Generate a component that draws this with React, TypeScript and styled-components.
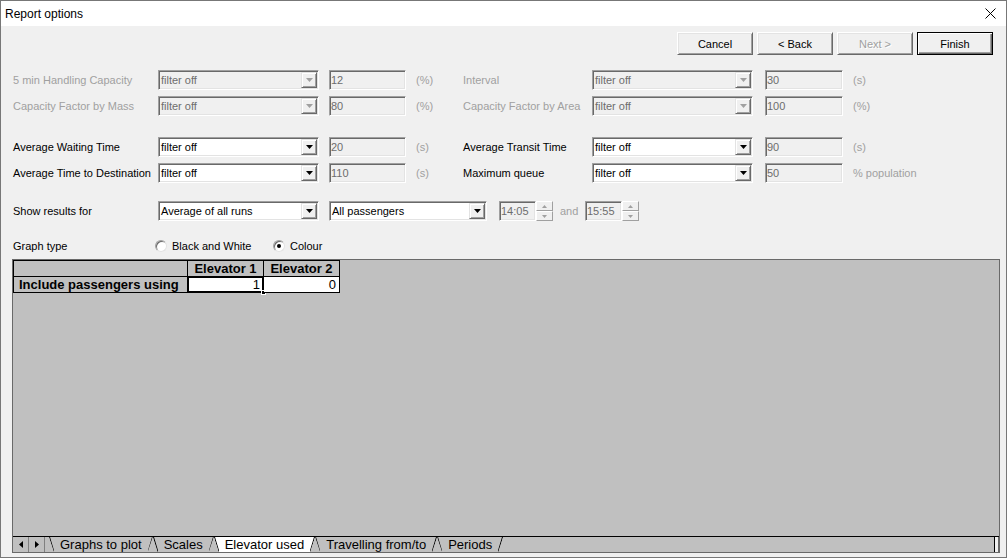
import React from 'react';
import styled, { createGlobalStyle } from 'styled-components';

const GlobalStyle = createGlobalStyle`
  html, body { margin: 0; padding: 0; }
  body {
    background: #ffffff;
    font-family: "Liberation Sans", Arial, sans-serif;
    font-size: 11px;
    color: #000;
    overflow: hidden;
  }
`;

const Window = styled.div`
  width: 1007px;
  height: 558px;
  box-sizing: border-box;
  border: 1px solid #777777;
  background: #f0f0f0;
  display: flex;
  flex-direction: column;
`;

const TitleBar = styled.div`
  height: 25px;
  flex: none;
  background: #ffffff;
  display: flex;
  align-items: center;
  padding: 0 10px 0 4px;
  font-family: "Liberation Sans", Arial, sans-serif;
  font-size: 12px;
`;

const Title = styled.span`
  flex: 1;
`;

const ButtonRow = styled.div`
  display: flex;
  justify-content: flex-end;
  gap: 4px;
  padding: 6px 13px 0 0;
`;

const Button = styled.button<{ $default?: boolean }>`
  width: 76px;
  height: 23px;
  box-sizing: border-box;
  padding: 0;
  font-family: "Liberation Sans", Arial, sans-serif;
  font-size: 11px;
  color: #000;
  background: #f0f0f0;
  border: 1px solid;
  border-color: ${(p) => (p.$default ? '#000' : '#ffffff #696969 #696969 #ffffff')};
  box-shadow: ${(p) =>
    p.$default
      ? 'inset 1px 1px 0 #ffffff, inset -1px -1px 0 #696969, inset -2px -2px 0 #a0a0a0'
      : 'inset 1px 1px 0 #e3e3e3, inset -1px -1px 0 #a0a0a0'};

  &:disabled {
    color: #a0a0a0;
    text-shadow: 1px 1px 0 #ffffff;
  }
`;

const FilterGrid = styled.div<{ $top: number }>`
  display: grid;
  grid-template-columns: 145px 171px 87px 47px 129px 173px 88px auto;
  grid-auto-rows: 20px;
  row-gap: 6px;
  align-items: center;
  padding-left: 12px;
  margin-top: ${(p) => p.$top}px;
`;

const Label = styled.span<{ $disabled?: boolean }>`
  color: ${(p) => (p.$disabled ? '#a0a0a0' : '#000')};
  white-space: nowrap;
`;

const Unit = styled.span`
  color: #a0a0a0;
  white-space: nowrap;
`;

const Sunken = styled.div<{ $w: number; $disabled?: boolean }>`
  width: ${(p) => p.$w}px;
  height: 20px;
  box-sizing: border-box;
  border: 1px solid;
  border-color: #a0a0a0 #ffffff #ffffff #a0a0a0;
  box-shadow: inset 1px 1px 0 #696969, inset -1px -1px 0 #e3e3e3;
  background: ${(p) => (p.$disabled ? '#f0f0f0' : '#ffffff')};
  display: flex;
  align-items: center;
`;

const Value = styled.span<{ $disabled?: boolean; $pad: number }>`
  flex: 1;
  padding-left: ${(p) => p.$pad}px;
  color: ${(p) => (p.$disabled ? '#6d6d6d' : '#000')};
  white-space: nowrap;
  overflow: hidden;
`;

const DropButton = styled.span`
  width: 16px;
  height: 16px;
  margin: 1px;
  box-sizing: border-box;
  background: #f0f0f0;
  border: 1px solid;
  border-color: #e3e3e3 #696969 #696969 #e3e3e3;
  box-shadow: inset 1px 1px 0 #ffffff, inset -1px -1px 0 #a0a0a0;
  display: flex;
  align-items: center;
  justify-content: center;
`;

const ResultsRow = styled.div`
  display: flex;
  align-items: center;
  height: 20px;
  margin-top: 18px;
  padding-left: 12px;
`;

const RowLabel = styled.span<{ $w: number }>`
  width: ${(p) => p.$w}px;
  flex: none;
  white-space: nowrap;
`;

const Spacer = styled.span<{ $w: number }>`
  width: ${(p) => p.$w}px;
  flex: none;
`;

const AndLabel = styled.span`
  width: 32px;
  flex: none;
  padding-left: 7px;
  box-sizing: border-box;
  color: #a0a0a0;
`;

const TimeField = styled.div`
  display: flex;
  align-items: center;
  flex: none;
`;

const Spinner = styled.div`
  width: 17px;
  height: 20px;
  display: flex;
  flex-direction: column;
`;

const SpinButton = styled.span`
  flex: 1;
  box-sizing: border-box;
  background: #f0f0f0;
  border: 1px solid;
  border-color: #ffffff #a0a0a0 #a0a0a0 #ffffff;
  display: flex;
  align-items: center;
  justify-content: center;
`;

const GraphRow = styled.div`
  display: flex;
  align-items: center;
  height: 14px;
  margin-top: 18px;
  padding-left: 12px;
`;

const RadioOption = styled.label<{ $w?: number }>`
  display: flex;
  align-items: center;
  gap: 5px;
  width: ${(p) => (p.$w ? `${p.$w}px` : 'auto')};
`;

const Radio = styled.span<{ $checked?: boolean }>`
  width: 12px;
  height: 12px;
  box-sizing: border-box;
  border-radius: 50%;
  border: 1px solid;
  border-color: #a0a0a0 #e3e3e3 #e3e3e3 #a0a0a0;
  box-shadow: inset 1px 1px 0 #696969;
  background: #ffffff;
  display: flex;
  align-items: center;
  justify-content: center;

  &::after {
    content: '';
    width: 4px;
    height: 4px;
    border-radius: 50%;
    background: ${(p) => (p.$checked ? '#000' : 'transparent')};
  }
`;

const Sheet = styled.div`
  flex: 1;
  margin: 6px 6px 4px 11px;
  display: flex;
  flex-direction: column;
  border: 1px solid #696969;
  border-bottom: none;
`;

const GridArea = styled.div`
  flex: 1;
  background: #c0c0c0;
`;

const CellGrid = styled.div`
  display: inline-grid;
  grid-template-columns: 174px 76px 76px;
  grid-auto-rows: 16px;
  border-top: 1px solid #000;
  border-left: 1px solid #000;
  font-family: "Liberation Sans", Arial, sans-serif;
  font-size: 13px;
  font-weight: bold;
`;

const Cell = styled.div<{ $kind: 'head' | 'row' | 'data'; $selected?: boolean }>`
  position: relative;
  border-right: 1px solid #000;
  border-bottom: 1px solid #000;
  background: ${(p) => (p.$kind === 'data' ? '#ffffff' : '#c0c0c0')};
  font-weight: ${(p) => (p.$kind === 'data' ? 'normal' : 'bold')};
  display: flex;
  align-items: center;
  justify-content: ${(p) => (p.$kind === 'head' ? 'center' : p.$kind === 'row' ? 'flex-start' : 'flex-end')};
  padding: ${(p) => (p.$kind === 'row' ? '0 0 0 5px' : p.$kind === 'data' ? '0 3px 0 0' : '0')};
  line-height: 16px;
  box-shadow: ${(p) => (p.$selected ? 'inset 1px 1px 0 #000, inset -1px -1px 0 #000' : 'none')};
  white-space: nowrap;
`;

const FillHandle = styled.span`
  position: absolute;
  right: -3px;
  bottom: -3px;
  width: 5px;
  height: 5px;
  box-sizing: border-box;
  background: #000;
  border: 1px solid #ffffff;
`;

const TabStrip = styled.div`
  height: 15px;
  border-top: 1px solid #000;
  border-bottom: 1px solid #696969;
  background: #c0c0c0;
  display: flex;
  align-items: stretch;
  font-family: "Liberation Sans", Arial, sans-serif;
  font-size: 13px;
`;

const ScrollButtons = styled.span`
  display: flex;
  margin-right: 4px;
`;

const ScrollButton = styled.span`
  width: 16px;
  display: flex;
  align-items: center;
  justify-content: center;
  border-right: 1px solid #808080;
  box-sizing: border-box;
`;

const Tab = styled.span<{ $active?: boolean }>`
  display: flex;
  align-items: stretch;
  background: ${(p) => (p.$active ? '#ffffff' : 'transparent')};
  clip-path: polygon(0 0, 100% 0, calc(100% - 5px) 100%, 5px 100%);
`;

const TabLabel = styled.span`
  display: flex;
  align-items: center;
  padding: 0 6px 0 6px;
  white-space: nowrap;
`;

const Splitter = styled.span`
  margin-left: auto;
  width: 3px;
  border-left: 1px solid #000;
  border-right: 1px solid #696969;
  background: #f0f0f0;
`;

const Caret = ({ color = '#000' }: { color?: string }) => (
  <svg width="7" height="4" viewBox="0 0 7 4">
    <polygon points="0,0 7,0 3.5,4" fill={color} />
  </svg>
);

const SpinCaret = ({ up }: { up?: boolean }) => (
  <svg width="5" height="3" viewBox="0 0 5 3">
    <polygon points={up ? '0,3 5,3 2.5,0' : '0,0 5,0 2.5,3'} fill="#a0a0a0" />
  </svg>
);

const TabEdge = ({ side }: { side: 'left' | 'right' }) => (
  <svg width="5" height="15" viewBox="0 0 5 15" style={{ flex: 'none' }}>
    {side === 'left' ? (
      <line x1="0.5" y1="0" x2="5" y2="15" stroke="#000" strokeWidth="1" />
    ) : (
      <line x1="0" y1="15" x2="4.5" y2="0" stroke="#000" strokeWidth="1" />
    )}
  </svg>
);

type Combo = { w: number; value: string; disabled?: boolean };

const ComboBox = ({ w, value, disabled }: Combo) => (
  <Sunken $w={w} $disabled={disabled}>
    <Value $disabled={disabled} $pad={2}>{value}</Value>
    <DropButton>
      <Caret color={disabled ? '#a0a0a0' : '#000'} />
    </DropButton>
  </Sunken>
);

const TextBox = ({ w, value }: { w: number; value: string }) => (
  <Sunken $w={w} $disabled>
    <Value $disabled $pad={1}>{value}</Value>
  </Sunken>
);

type Filter = { label: string; value: string; unit: string };

const topFilters: [Filter, Filter][] = [
  [
    { label: '5 min Handling Capacity', value: '12', unit: '(%)' },
    { label: 'Interval', value: '30', unit: '(s)' },
  ],
  [
    { label: 'Capacity Factor by Mass', value: '80', unit: '(%)' },
    { label: 'Capacity Factor by Area', value: '100', unit: '(%)' },
  ],
];

const timeFilters: [Filter, Filter][] = [
  [
    { label: 'Average Waiting Time', value: '20', unit: '(s)' },
    { label: 'Average Transit Time', value: '90', unit: '(s)' },
  ],
  [
    { label: 'Average Time to Destination', value: '110', unit: '(s)' },
    { label: 'Maximum queue', value: '50', unit: '% population' },
  ],
];

const tabs = ['Graphs to plot', 'Scales', 'Elevator used', 'Travelling from/to', 'Periods'];

const FilterRows = ({ rows, disabled, top }: { rows: [Filter, Filter][]; disabled?: boolean; top: number }) => (
  <FilterGrid $top={top}>
    {rows.map(([l, r]) => (
      <React.Fragment key={l.label}>
        <Label $disabled={disabled}>{l.label}</Label>
        <ComboBox w={161} value="filter off" disabled={disabled} />
        <TextBox w={77} value={l.value} />
        <Unit>{l.unit}</Unit>
        <Label $disabled={disabled}>{r.label}</Label>
        <ComboBox w={161} value="filter off" disabled={disabled} />
        <TextBox w={78} value={r.value} />
        <Unit>{r.unit}</Unit>
      </React.Fragment>
    ))}
  </FilterGrid>
);

const Time = ({ value }: { value: string }) => (
  <TimeField>
    <TextBox w={37} value={value} />
    <Spinner>
      <SpinButton>
        <SpinCaret up />
      </SpinButton>
      <SpinButton>
        <SpinCaret />
      </SpinButton>
    </Spinner>
  </TimeField>
);

export default function App() {
  return (
    <>
      <GlobalStyle />
      <Window>
        <TitleBar>
          <Title>Report options</Title>
          <svg width="11" height="11" viewBox="0 0 11 11">
            <path d="M0.5 0.5 L10.5 10.5 M10.5 0.5 L0.5 10.5" stroke="#000" strokeWidth="1" />
          </svg>
        </TitleBar>

        <ButtonRow>
          <Button>Cancel</Button>
          <Button>&lt; Back</Button>
          <Button disabled>Next &gt;</Button>
          <Button $default>Finish</Button>
        </ButtonRow>

        <FilterRows rows={topFilters} disabled top={15} />
        <FilterRows rows={timeFilters} top={21} />

        <ResultsRow>
          <RowLabel $w={145}>Show results for</RowLabel>
          <ComboBox w={161} value="Average of all runs" />
          <Spacer $w={10} />
          <ComboBox w={158} value="All passengers" />
          <Spacer $w={12} />
          <Time value="14:05" />
          <AndLabel>and</AndLabel>
          <Time value="15:55" />
        </ResultsRow>

        <GraphRow>
          <RowLabel $w={142}>Graph type</RowLabel>
          <RadioOption $w={118}>
            <Radio />
            Black and White
          </RadioOption>
          <RadioOption>
            <Radio $checked />
            Colour
          </RadioOption>
        </GraphRow>

        <Sheet>
          <GridArea>
            <CellGrid>
              <Cell $kind="head" />
              <Cell $kind="head">Elevator 1</Cell>
              <Cell $kind="head">Elevator 2</Cell>
              <Cell $kind="row">Include passengers using</Cell>
              <Cell $kind="data" $selected>
                1
                <FillHandle />
              </Cell>
              <Cell $kind="data">0</Cell>
            </CellGrid>
          </GridArea>
          <TabStrip>
            <ScrollButtons>
              <ScrollButton>
                <svg width="4" height="7" viewBox="0 0 4 7">
                  <polygon points="4,0 4,7 0,3.5" fill="#000" />
                </svg>
              </ScrollButton>
              <ScrollButton>
                <svg width="4" height="7" viewBox="0 0 4 7">
                  <polygon points="0,0 0,7 4,3.5" fill="#000" />
                </svg>
              </ScrollButton>
            </ScrollButtons>
            {tabs.map((t) => (
              <Tab key={t} $active={t === 'Elevator used'}>
                <TabEdge side="left" />
                <TabLabel>{t}</TabLabel>
                <TabEdge side="right" />
              </Tab>
            ))}
            <Splitter />
          </TabStrip>
        </Sheet>
      </Window>
    </>
  );
}
